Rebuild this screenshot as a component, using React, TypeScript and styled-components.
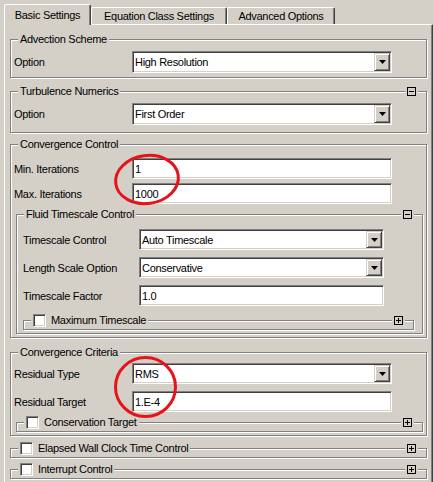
import React from "react";
import styled, { createGlobalStyle, css } from "styled-components";

const GlobalStyle = createGlobalStyle`
  html, body { margin: 0; padding: 0; background: #d4d0c8; }
  body {
    font-family: "Liberation Sans", Arial, sans-serif;
    font-size: 11px;
    color: #000;
  }
  * { box-sizing: border-box; }
`;

const Screen = styled.div`
  position: relative;
  width: 433px;
  height: 482px;
  overflow: hidden;
  padding: 4px 0 0 4px;
  background: #d4d0c8;
  letter-spacing: -0.3px;
`;

const TabBar = styled.div`
  display: flex;
  align-items: flex-end;
  height: 20px;
`;

const Tab = styled.div<{ $active?: boolean; $w: number }>`
  position: relative;
  z-index: ${(p) => (p.$active ? 1 : 0)};
  width: ${(p) => p.$w}px;
  height: ${(p) => (p.$active ? 21 : 17)}px;
  margin-bottom: ${(p) => (p.$active ? -1 : 0)}px;
  background: #d4d0c8;
  border-top: 1px solid #fff;
  border-left: 1px solid #fff;
  border-right: 1px solid #404040;
  border-top-left-radius: 2px;
  border-top-right-radius: 2px;
  box-shadow: inset -1px 0 0 #808080;
  display: flex;
  align-items: center;
  justify-content: center;
  white-space: nowrap;
`;

const Pane = styled.div`
  width: 429px;
  height: 458px;
  border-top: 1px solid #fff;
  border-left: 1px solid #fff;
  border-right: 1px solid #404040;
  box-shadow: inset -1px 0 0 #808080;
  padding: 14px 5px 0 5px;
  display: flex;
  flex-direction: column;
`;

const etched = css`
  position: relative;
  border: 1px solid #808080;
  box-shadow: inset 1px 1px 0 #fff, 1px 1px 0 #fff;
`;

const Group = styled.section<{
  $mt?: number;
  $pt: number;
  $pb: number;
  $pl?: number;
  $pr?: number;
  $ml?: number;
}>`
  ${etched};
  margin-top: ${(p) => p.$mt ?? 0}px;
  margin-left: ${(p) => p.$ml ?? 0}px;
  padding: ${(p) => p.$pt}px ${(p) => p.$pr ?? 3}px ${(p) => p.$pb}px
    ${(p) => p.$pl ?? 3}px;
  display: flex;
  flex-direction: column;
`;

const Folded = styled.div<{ $mt?: number; $ml?: number; $mr?: number }>`
  ${etched};
  height: 10px;
  margin-top: ${(p) => p.$mt ?? 0}px;
  margin-left: ${(p) => p.$ml ?? 0}px;
  margin-right: ${(p) => p.$mr ?? 0}px;
`;

const Title = styled.div`
  position: absolute;
  top: -7px;
  left: 7px;
  height: 13px;
  padding: 0 2px;
  background: #d4d0c8;
  display: flex;
  align-items: center;
  gap: 5px;
  line-height: 13px;
  white-space: nowrap;
`;

const FoldSwitch = styled.div`
  position: absolute;
  top: -7px;
  right: 8px;
  height: 13px;
  padding: 0 2px;
  background: #d4d0c8;
  display: flex;
  align-items: center;
`;

const Row = styled.div<{ $label: number; $pr: number; $h: number; $mt?: number }>`
  display: grid;
  grid-template-columns: ${(p) => p.$label}px 1fr;
  align-items: center;
  height: ${(p) => p.$h}px;
  margin-top: ${(p) => p.$mt ?? 0}px;
  padding-right: ${(p) => p.$pr}px;
`;

const Label = styled.span`
  white-space: nowrap;
`;

const sunken = css`
  background: #fff;
  border: 1px solid;
  border-color: #808080 #fff #fff #808080;
  box-shadow: inset 1px 1px 0 #404040, inset -1px -1px 0 #d4d0c8;
`;

const Field = styled.div`
  ${sunken};
  height: 100%;
  display: flex;
  align-items: center;
  padding: 0 2px 0 2px;
  white-space: nowrap;
`;

const ComboBox = styled.div`
  ${sunken};
  height: 100%;
  display: flex;
  align-items: stretch;
  padding: 1px 1px 1px 2px;
`;

const ComboText = styled.span`
  flex: 1;
  display: flex;
  align-items: center;
  white-space: nowrap;
`;

const ComboButton = styled.div`
  width: 16px;
  background: #d4d0c8;
  border: 1px solid;
  border-color: #d4d0c8 #404040 #404040 #d4d0c8;
  box-shadow: inset 1px 1px 0 #fff, inset -1px -1px 0 #808080;
  display: flex;
  align-items: center;
  justify-content: center;
`;

const CheckBox = styled.span`
  ${sunken};
  display: inline-block;
  width: 13px;
  height: 13px;
  flex: none;
`;

const Marks = styled.svg`
  position: absolute;
  left: 0;
  top: 0;
  pointer-events: none;
`;

function Arrow() {
  return (
    <svg width="7" height="4" viewBox="0 0 7 4">
      <path d="M0 0h7L3.5 4z" fill="#000" />
    </svg>
  );
}

function Toggle({ open }: { open?: boolean }) {
  return (
    <FoldSwitch>
      <svg width="9" height="9" viewBox="0 0 9 9" shapeRendering="crispEdges">
        <rect x="0.5" y="0.5" width="8" height="8" fill="#d4d0c8" stroke="#000" />
        <path d="M2 4.5h5" stroke="#000" />
        {!open && <path d="M4.5 2v5" stroke="#000" />}
      </svg>
    </FoldSwitch>
  );
}

function Combo({ value }: { value: string }) {
  return (
    <ComboBox>
      <ComboText>{value}</ComboText>
      <ComboButton>
        <Arrow />
      </ComboButton>
    </ComboBox>
  );
}

export default function App() {
  return (
    <>
      <GlobalStyle />
      <Screen>
        <TabBar>
          <Tab $active $w={87}>Basic Settings</Tab>
          <Tab $w={136}>Equation Class Settings</Tab>
          <Tab $w={108}>Advanced Options</Tab>
        </TabBar>
        <Pane>
          <Group $pt={11} $pb={4}>
            <Title>Advection Scheme</Title>
            <Row $label={118} $pr={31} $h={22}>
              <Label>Option</Label>
              <Combo value="High Resolution" />
            </Row>
          </Group>

          <Group $mt={13} $pt={11} $pb={7}>
            <Title>Turbulence Numerics</Title>
            <Toggle open />
            <Row $label={118} $pr={31} $h={22}>
              <Label>Option</Label>
              <Combo value="First Order" />
            </Row>
          </Group>

          <Group $mt={11} $pt={13} $pb={3}>
            <Title>Convergence Control</Title>
            <Row $label={118} $pr={31} $h={21}>
              <Label>Min. Iterations</Label>
              <Field>1</Field>
            </Row>
            <Row $label={118} $pr={31} $h={21} $mt={4}>
              <Label>Max. Iterations</Label>
              <Field>1000</Field>
            </Row>

            <Group $mt={10} $ml={2} $pt={14} $pb={3} $pl={6} $pr={3}>
              <Title>Fluid Timescale Control</Title>
              <Toggle open />
              <Row $label={116} $pr={35} $h={21}>
                <Label>Timescale Control</Label>
                <Combo value="Auto Timescale" />
              </Row>
              <Row $label={116} $pr={35} $h={21} $mt={7}>
                <Label>Length Scale Option</Label>
                <Combo value="Conservative" />
              </Row>
              <Row $label={116} $pr={35} $h={21} $mt={7}>
                <Label>Timescale Factor</Label>
                <Field>1.0</Field>
              </Row>
              <Folded $mt={14} $mr={5}>
                <Title>
                  <CheckBox />
                  Maximum Timescale
                </Title>
                <Toggle />
              </Folded>
            </Group>
          </Group>

          <Group $mt={14} $pt={10} $pb={3}>
            <Title>Convergence Criteria</Title>
            <Row $label={118} $pr={31} $h={21}>
              <Label>Residual Type</Label>
              <Combo value="RMS" />
            </Row>
            <Row $label={118} $pr={31} $h={21} $mt={7}>
              <Label>Residual Target</Label>
              <Field>1.E-4</Field>
            </Row>
            <Folded $mt={10} $ml={2}>
              <Title>
                <CheckBox />
                Conservation Target
              </Title>
              <Toggle />
            </Folded>
          </Group>

          <Folded $mt={12}>
            <Title>
              <CheckBox />
              Elapsed Wall Clock Time Control
            </Title>
            <Toggle />
          </Folded>

          <Folded $mt={11}>
            <Title>
              <CheckBox />
              Interrupt Control
            </Title>
            <Toggle />
          </Folded>
        </Pane>

        <Marks width="433" height="482" viewBox="0 0 433 482">
          <ellipse
            cx="147"
            cy="179.5"
            rx="31.5"
            ry="24"
            fill="none"
            stroke="#e8121a"
            strokeWidth="3"
            transform="rotate(-8 147 179.5)"
          />
          <ellipse
            cx="145.5"
            cy="387"
            rx="30"
            ry="29.5"
            fill="none"
            stroke="#e8121a"
            strokeWidth="3"
          />
        </Marks>
      </Screen>
    </>
  );
}
